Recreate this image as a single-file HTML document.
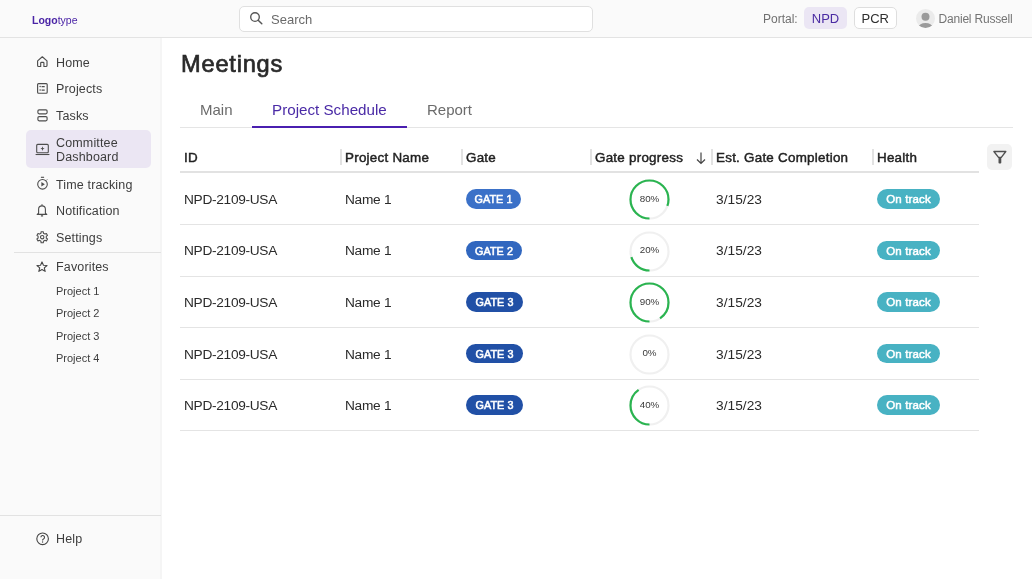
<!DOCTYPE html>
<html><head><meta charset="utf-8">
<style>
*{margin:0;padding:0;box-sizing:border-box}
html,body{width:1032px;height:579px;overflow:hidden;background:#fff;font-family:"Liberation Sans",sans-serif;color:#262626}
.a{position:absolute;white-space:nowrap}
#hdr{position:absolute;left:0;top:0;width:1032px;height:38px;background:#fafafa;border-bottom:1px solid #e3e3e3}
#side{position:absolute;left:0;top:38px;width:162px;height:541px;background:#fafafa;border-right:2px solid #f5f5f5}
.nav{font-size:12.5px;color:#3d3d3d;line-height:15px;letter-spacing:0.15px}
.ic{position:absolute}
.sub{font-size:11px;color:#3e3e3e;line-height:13px}
.th{font-size:13.4px;font-weight:normal;-webkit-text-stroke:0.45px #222;letter-spacing:0.25px;color:#222;line-height:16px}
.td{font-size:13.7px;color:#2a2a2a;line-height:16px}
.sep{position:absolute;width:2px;background:#e2e2e2;top:149px;height:16px}
.rowb{position:absolute;left:180px;width:799px;height:1px;background:#e4e4e4}
.gate{position:absolute;left:466px;height:19.5px;border-radius:10px;color:#fff;font-size:10.8px;font-weight:normal;-webkit-text-stroke:0.55px #fff;letter-spacing:0.1px;line-height:20.8px;text-align:center}
.ok{position:absolute;left:877px;width:63px;height:19.5px;border-radius:10px;background:#48b2c3;color:#fff;font-size:11.5px;font-weight:normal;-webkit-text-stroke:0.5px #fff;letter-spacing:0.15px;line-height:20.5px;text-align:center}
.ring{position:absolute;left:629px;width:41px;height:41px}
.pct{position:absolute;left:629px;width:41px;text-align:center;font-size:9.8px;letter-spacing:0px;color:#3a3a3a;line-height:12px}
</style></head><body><div id="wrap" style="position:absolute;left:0;top:0;width:1032px;height:579px;will-change:transform">
<div id="hdr"></div>
<div id="side"></div>

<!-- header -->
<div class="a" style="left:32px;top:14px;font-size:10.5px;line-height:13px;color:#4a24a6"><b>Logo</b>type</div>
<div class="a" style="left:239px;top:6px;width:354px;height:26px;background:#fff;border:1px solid #e0e0e0;border-radius:5px"></div>
<svg class="ic" style="left:249px;top:11px" width="15" height="15" viewBox="0 0 15 15"><circle cx="6" cy="6" r="4.3" fill="none" stroke="#555" stroke-width="1.35"/><path d="M9.2 9.2L12.8 12.8" stroke="#555" stroke-width="1.45" stroke-linecap="round"/></svg>
<div class="a" style="left:271px;top:11.5px;font-size:13px;line-height:16px;color:#6a6a6a">Search</div>

<div class="a" style="left:763px;top:12px;font-size:12px;line-height:15px;color:#707070">Portal:</div>
<div class="a" style="left:804px;top:7.4px;width:43px;height:22px;background:#ebe6f4;border-radius:5px;color:#4a2ba3;font-size:13px;line-height:23.5px;text-align:center">NPD</div>
<div class="a" style="left:854px;top:7.4px;width:42.5px;height:22px;background:#fff;border:1px solid #dedede;border-radius:5px;color:#2f2f2f;font-size:13px;line-height:21.5px;text-align:center">PCR</div>
<svg class="ic" style="left:916px;top:9px" width="19" height="19" viewBox="0 0 19 19"><defs><clipPath id="cc"><circle cx="9.5" cy="9.5" r="9.5"/></clipPath></defs><circle cx="9.5" cy="9.5" r="9.5" fill="#ebebeb"/><g clip-path="url(#cc)"><circle cx="9.5" cy="7.8" r="4" fill="#9a9a9a"/><ellipse cx="9.5" cy="18.5" rx="7" ry="4.5" fill="#9a9a9a"/></g></svg>
<div class="a" style="left:938.5px;top:12.2px;font-size:12px;letter-spacing:-0.2px;line-height:15px;color:#747474">Daniel Russell</div>

<!-- sidebar -->
<svg class="ic" style="left:36px;top:56px" width="13" height="12" viewBox="0 0 13 12"><path d="M1.6 4.9L6.3 0.8L11 4.9V9.5Q11 10.5 10 10.5H7.9V7.1Q7.9 6.3 7.1 6.3H5.5Q4.7 6.3 4.7 7.1V10.5H2.6Q1.6 10.5 1.6 9.5Z" fill="none" stroke="#4d4d4d" stroke-width="1.15" stroke-linejoin="round"/></svg>
<div class="a nav" style="left:56px;top:56px">Home</div>
<svg class="ic" style="left:36px;top:82px" width="13" height="13" viewBox="0 0 13 13"><rect x="1.6" y="1.6" width="9.6" height="9.6" rx="1" fill="none" stroke="#4d4d4d" stroke-width="1.15"/><circle cx="4.1" cy="4.6" r="0.75" fill="#4d4d4d"/><circle cx="4.1" cy="8.1" r="0.75" fill="#4d4d4d"/><path d="M5.6 4.6h3.1M5.6 8.1h3.1" stroke="#4d4d4d" stroke-width="1.1"/></svg>
<div class="a nav" style="left:56px;top:82px">Projects</div>
<svg class="ic" style="left:36px;top:108px" width="13" height="14" viewBox="0 0 13 14"><rect x="1.9" y="1.9" width="9.2" height="3.9" rx="1.2" fill="none" stroke="#4d4d4d" stroke-width="1.15"/><rect x="1.9" y="8.6" width="9.2" height="4.2" rx="1.2" fill="none" stroke="#4d4d4d" stroke-width="1.15"/></svg>
<div class="a nav" style="left:56px;top:109px">Tasks</div>

<div class="a" style="left:26px;top:130px;width:125px;height:38px;background:#ebe6f3;border-radius:5px"></div>
<svg class="ic" style="left:35px;top:143px" width="15" height="13" viewBox="0 0 15 13"><rect x="1.7" y="1.4" width="11.6" height="8.4" rx="1" fill="none" stroke="#4d4d4d" stroke-width="1.1"/><path d="M0.6 11.5h13.8" stroke="#4d4d4d" stroke-width="1.1"/><path d="M7.5 3.3Q7.6 5.5 9.6 5.6Q7.6 5.7 7.5 7.9Q7.4 5.7 5.4 5.6Q7.4 5.5 7.5 3.3Z" fill="#4d4d4d"/></svg>
<div class="a nav" style="left:56px;top:135.5px;line-height:14.6px">Committee<br>Dashboard</div>

<svg class="ic" style="left:36px;top:176px" width="13" height="15" viewBox="0 0 13 15"><circle cx="6.5" cy="8.3" r="4.8" fill="none" stroke="#4d4d4d" stroke-width="1.1"/><path d="M4.9 1.3h3.2" stroke="#4d4d4d" stroke-width="1.1"/><path d="M10.3 4.4l0.9-0.9" stroke="#4d4d4d" stroke-width="1"/><path d="M5.4 6.1v4.4l3.4-2.2z" fill="#4d4d4d"/></svg>
<div class="a nav" style="left:56px;top:178px">Time tracking</div>
<svg class="ic" style="left:36px;top:203px" width="12" height="15" viewBox="0 0 12 15"><path d="M2.6 10.3V6.3A3.4 3.4 0 0 1 9.4 6.3V10.3L10.8 11.4H1.2Z" fill="none" stroke="#4d4d4d" stroke-width="1.1" stroke-linejoin="round"/><path d="M6 1.2v1.6M4.9 12.9h2.2" stroke="#4d4d4d" stroke-width="1.1"/></svg>
<div class="a nav" style="left:56px;top:204px">Notification</div>
<svg class="ic" style="left:36px;top:231px" width="13" height="13" viewBox="0 0 13 13"><path d="M4.96 2.19 L5.09 0.71 L7.31 0.71 L7.44 2.19 L9.05 3.12 L10.40 2.49 L11.51 4.42 L10.30 5.27 L10.30 7.13 L11.51 7.98 L10.40 9.91 L9.05 9.28 L7.44 10.21 L7.31 11.69 L5.09 11.69 L4.96 10.21 L3.35 9.28 L2.00 9.91 L0.89 7.98 L2.10 7.13 L2.10 5.27 L0.89 4.42 L2.00 2.49 L3.35 3.12Z" fill="none" stroke="#4d4d4d" stroke-width="1.1" stroke-linejoin="round"/><circle cx="6.2" cy="6.2" r="1.7" fill="none" stroke="#4d4d4d" stroke-width="1.1"/></svg>
<div class="a nav" style="left:56px;top:231px">Settings</div>

<div class="a" style="left:14px;top:252px;width:147px;height:1px;background:#e2e2e2"></div>
<svg class="ic" style="left:36px;top:261px" width="12" height="12" viewBox="0 0 12 12"><path d="M6 0.9l1.45 3.3 3.6.3-2.75 2.35.85 3.5L6 8.45 2.85 10.35l.85-3.5L.95 4.5l3.6-.3z" fill="none" stroke="#444" stroke-width="1.1" stroke-linejoin="round"/></svg>
<div class="a nav" style="left:56px;top:260px">Favorites</div>
<div class="a sub" style="left:56px;top:285px">Project 1</div>
<div class="a sub" style="left:56px;top:307px">Project 2</div>
<div class="a sub" style="left:56px;top:330px">Project 3</div>
<div class="a sub" style="left:56px;top:352px">Project 4</div>

<div class="a" style="left:0;top:515px;width:161px;height:1px;background:#e2e2e2"></div>
<svg class="ic" style="left:36px;top:532px" width="14" height="14" viewBox="0 0 14 14"><circle cx="6.6" cy="6.8" r="5.8" fill="none" stroke="#444" stroke-width="1.1"/><path d="M4.9 5.3a1.8 1.8 0 1 1 2.6 1.6c-.6.3-.9.7-.9 1.3v.3" fill="none" stroke="#444" stroke-width="1.1"/><circle cx="6.6" cy="10" r="0.65" fill="#444"/></svg>
<div class="a nav" style="left:56px;top:532px">Help</div>

<!-- main -->
<div class="a" style="left:181px;top:50.5px;font-size:23.6px;font-weight:normal;-webkit-text-stroke:0.7px #2a2a2a;letter-spacing:0.8px;line-height:26px;color:#2a2a2a">Meetings</div>
<div class="a" style="left:200px;top:101px;font-size:15px;line-height:18px;color:#6b6b6b">Main</div>
<div class="a" style="left:272px;top:101px;font-size:15.2px;line-height:18px;color:#4a2aa6">Project Schedule</div>
<div class="a" style="left:427px;top:101px;font-size:15px;line-height:18px;color:#6b6b6b">Report</div>
<div class="a" style="left:180px;top:127px;width:833px;height:1px;background:#e5e5e5"></div>
<div class="a" style="left:252px;top:126px;width:155px;height:2px;background:#4a1fb0"></div>

<!-- table header -->
<div class="a th" style="left:184px;top:150px">ID</div>
<div class="sep" style="left:340px"></div>
<div class="a th" style="left:345px;top:150px">Project Name</div>
<div class="sep" style="left:461px"></div>
<div class="a th" style="left:466px;top:150px">Gate</div>
<div class="sep" style="left:590px"></div>
<div class="a th" style="left:595px;top:150px">Gate progress</div>
<svg class="ic" style="left:695px;top:151px" width="12" height="14" viewBox="0 0 12 14"><path d="M6 1.5v11M2 8.5l4 4 4-4" fill="none" stroke="#444" stroke-width="1.2"/></svg>
<div class="sep" style="left:711px"></div>
<div class="a th" style="left:716px;top:150px">Est. Gate Completion</div>
<div class="sep" style="left:872px"></div>
<div class="a th" style="left:877px;top:150px">Health</div>
<div class="a" style="left:987px;top:144px;width:25px;height:26px;background:#f2f2f2;border-radius:5px"></div>
<svg class="ic" style="left:992px;top:150px" width="16" height="15" viewBox="0 0 16 15"><path d="M1.9 1.5H13.8L9.3 7.3H6.5Z" fill="none" stroke="#505050" stroke-width="1.35" stroke-linejoin="round"/><path d="M6.5 7H9.3V12.5Q9.3 13.4 8.4 13.4H7.4Q6.5 13.4 6.5 12.5Z" fill="#505050"/></svg>
<div class="a" style="left:180px;top:171px;width:799px;height:2px;background:#e2e2e2"></div>

<div class="a td" style="left:184px;top:191.7px;letter-spacing:-0.3px">NPD-2109-USA</div>
<div class="a td" style="left:345px;top:191.7px;letter-spacing:-0.3px;word-spacing:0.3px">Name 1</div>
<div class="gate" style="top:189.0px;width:55px;background:#3b71c8">GATE 1</div>
<svg class="ring" style="top:178.9px" viewBox="0 0 41 41"><circle cx="20.5" cy="20.5" r="19" fill="none" stroke="#f0f0f0" stroke-width="2.2"/><circle cx="20.5" cy="20.5" r="19" fill="none" stroke="#2ab450" stroke-width="2.2" stroke-dasharray="95.50 119.38" transform="rotate(90 20.5 20.5)"/></svg>
<div class="pct" style="top:192.5px">80%</div>
<div class="a td" style="left:716px;top:191.7px;letter-spacing:0.05px">3/15/23</div>
<div class="ok" style="top:189.0px">On track</div>
<div class="rowb" style="top:224.0px"></div>
<div class="a td" style="left:184px;top:243.3px;letter-spacing:-0.3px">NPD-2109-USA</div>
<div class="a td" style="left:345px;top:243.3px;letter-spacing:-0.3px;word-spacing:0.3px">Name 1</div>
<div class="gate" style="top:240.6px;width:56px;background:#3167bf">GATE 2</div>
<svg class="ring" style="top:230.5px" viewBox="0 0 41 41"><circle cx="20.5" cy="20.5" r="19" fill="none" stroke="#f0f0f0" stroke-width="2.2"/><circle cx="20.5" cy="20.5" r="19" fill="none" stroke="#2ab450" stroke-width="2.2" stroke-dasharray="23.88 119.38" transform="rotate(90 20.5 20.5)"/></svg>
<div class="pct" style="top:244.1px">20%</div>
<div class="a td" style="left:716px;top:243.3px;letter-spacing:0.05px">3/15/23</div>
<div class="ok" style="top:240.6px">On track</div>
<div class="rowb" style="top:275.6px"></div>
<div class="a td" style="left:184px;top:294.9px;letter-spacing:-0.3px">NPD-2109-USA</div>
<div class="a td" style="left:345px;top:294.9px;letter-spacing:-0.3px;word-spacing:0.3px">Name 1</div>
<div class="gate" style="top:292.2px;width:57px;background:#2150a6">GATE 3</div>
<svg class="ring" style="top:282.1px" viewBox="0 0 41 41"><circle cx="20.5" cy="20.5" r="19" fill="none" stroke="#f0f0f0" stroke-width="2.2"/><circle cx="20.5" cy="20.5" r="19" fill="none" stroke="#2ab450" stroke-width="2.2" stroke-dasharray="107.44 119.38" transform="rotate(90 20.5 20.5)"/></svg>
<div class="pct" style="top:295.7px">90%</div>
<div class="a td" style="left:716px;top:294.9px;letter-spacing:0.05px">3/15/23</div>
<div class="ok" style="top:292.2px">On track</div>
<div class="rowb" style="top:327.2px"></div>
<div class="a td" style="left:184px;top:346.5px;letter-spacing:-0.3px">NPD-2109-USA</div>
<div class="a td" style="left:345px;top:346.5px;letter-spacing:-0.3px;word-spacing:0.3px">Name 1</div>
<div class="gate" style="top:343.8px;width:57px;background:#2150a6">GATE 3</div>
<svg class="ring" style="top:333.7px" viewBox="0 0 41 41"><circle cx="20.5" cy="20.5" r="19" fill="none" stroke="#f0f0f0" stroke-width="2.2"/><circle cx="20.5" cy="20.5" r="19" fill="none" stroke="#2ab450" stroke-width="2.2" stroke-dasharray="0.00 119.38" transform="rotate(90 20.5 20.5)"/></svg>
<div class="pct" style="top:347.3px">0%</div>
<div class="a td" style="left:716px;top:346.5px;letter-spacing:0.05px">3/15/23</div>
<div class="ok" style="top:343.8px">On track</div>
<div class="rowb" style="top:378.8px"></div>
<div class="a td" style="left:184px;top:398.1px;letter-spacing:-0.3px">NPD-2109-USA</div>
<div class="a td" style="left:345px;top:398.1px;letter-spacing:-0.3px;word-spacing:0.3px">Name 1</div>
<div class="gate" style="top:395.4px;width:57px;background:#2150a6">GATE 3</div>
<svg class="ring" style="top:385.3px" viewBox="0 0 41 41"><circle cx="20.5" cy="20.5" r="19" fill="none" stroke="#f0f0f0" stroke-width="2.2"/><circle cx="20.5" cy="20.5" r="19" fill="none" stroke="#2ab450" stroke-width="2.2" stroke-dasharray="47.75 119.38" transform="rotate(90 20.5 20.5)"/></svg>
<div class="pct" style="top:398.9px">40%</div>
<div class="a td" style="left:716px;top:398.1px;letter-spacing:0.05px">3/15/23</div>
<div class="ok" style="top:395.4px">On track</div>
<div class="rowb" style="top:430.4px"></div>
</div></body></html>
